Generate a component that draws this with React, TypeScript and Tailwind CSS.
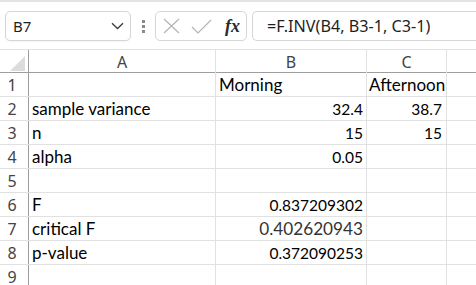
import React from "react"

const ui = { fontFamily: '"Noto Sans", "Open Sans", sans-serif' }
const cellFont = { fontFamily: 'Lato, "Liberation Sans", sans-serif' }

type Row = { n: number; a?: string; b?: string; c?: string; big?: boolean }

const rows: Row[] = [
  { n: 1, b: "Morning", c: "Afternoon" },
  { n: 2, a: "sample variance", b: "32.4", c: "38.7" },
  { n: 3, a: "n", b: "15", c: "15" },
  { n: 4, a: "alpha", b: "0.05" },
  { n: 5 },
  { n: 6, a: "F", b: "0.837209302" },
  { n: 7, a: "critical F", b: "0.402620943", big: true },
  { n: 8, a: "p-value", b: "0.372090253" },
  { n: 9 },
]

const isNum = (s?: string) => !!s && /^[0-9.]+$/.test(s)

// Lato runs wide on digits and narrow on letters next to Calibri, so size them apart
function cellSize(s?: string, big?: boolean) {
  if (big) return "text-[17.2px] text-[#333]"
  return isNum(s) ? "text-[15.5px]" : "text-[17px]"
}

function FormulaBar() {
  return (
    <div className="flex h-[49px] items-start border-t-2 border-[#e3e3e3] bg-white pt-[9px]" style={ui}>
      <div className="ml-[5px] flex h-[30px] w-[126px] items-center justify-between rounded-[5px] border border-[#d6d6d6] bg-white pl-[7px] pr-[6px] shadow-[0_1px_1px_rgba(0,0,0,0.04)]">
        <span className="text-[15px] text-[#1f1f1f]">B7</span>
        <svg width="13" height="8" viewBox="0 0 13 8" fill="none">
          <path d="M1 1.2 L6.5 6.5 L12 1.2" stroke="#3b3b3b" strokeWidth="1.3" />
        </svg>
      </div>
      <div className="ml-[11px] mt-[9px] flex flex-col gap-[2px]">
        <span className="h-[3px] w-[3px] bg-[#8a8a8a]" />
        <span className="h-[3px] w-[3px] bg-[#8a8a8a]" />
        <span className="h-[3px] w-[3px] bg-[#8a8a8a]" />
      </div>
      <div className="ml-[10px] flex h-[30px] w-[92px] items-center rounded-[5px] border border-[#d6d6d6] bg-white pl-[7px]">
        <svg width="17" height="16" viewBox="0 0 17 16" fill="none">
          <path d="M1 1 L16 15 M16 1 L1 15" stroke="#b4b4b4" strokeWidth="1.2" />
        </svg>
        <svg className="ml-[11px]" width="21" height="15" viewBox="0 0 21 15" fill="none">
          <path d="M1 8 L7 14 L20 1" stroke="#b4b4b4" strokeWidth="1.2" />
        </svg>
        <span
          className="ml-[13px] text-[18px] font-bold italic leading-none text-[#2a2a2a]"
          style={{ fontFamily: '"Liberation Serif", serif' }}
        >
          fx
        </span>
      </div>
      <div className="ml-[5px] flex h-[30px] flex-1 items-center rounded-l-[5px] border border-r-0 border-[#d6d6d6] bg-white pl-[14px]">
        <span className="text-[16.2px] text-[#1f1f1f]">=F.INV(B4, B3-1, C3-1)</span>
      </div>
    </div>
  )
}

export default function App() {
  const cols = "grid-cols-[29px_187px_151px_80px_1fr]"
  return (
    <div className="h-[285px] w-[476px] overflow-hidden bg-white">
      <FormulaBar />
      <div className={`grid h-[24px] ${cols} border-b border-t border-[#e3e3e3] border-b-[#9e9e9e] text-[16px] text-[#444]`} style={ui}>
        <div className="flex items-end justify-end border-r border-[#9e9e9e] pb-[3px] pr-[3px]">
          <svg width="15" height="15" viewBox="0 0 15 15">
            <path d="M15 0 L15 15 L0 15 Z" fill="#dcdcdc" />
          </svg>
        </div>
        <div className="flex items-center justify-center border-r border-[#e1e1e1]">A</div>
        <div className="flex items-center justify-center border-r border-[#e1e1e1]">B</div>
        <div className="flex items-center justify-center border-r border-[#e1e1e1]">C</div>
        <div />
      </div>
      {rows.map((r) => (
        <div key={r.n} className={`grid h-[24px] ${cols} border-b border-[#e1e1e1] leading-none text-black`} style={cellFont}>
          <div className="flex items-center justify-center border-r border-[#9e9e9e] pr-[4px] text-[16px] text-[#444]" style={ui}>
            {r.n}
          </div>
          <div className={`flex items-end overflow-visible whitespace-nowrap border-r border-[#e1e1e1] pb-[3px] pl-[3px] ${cellSize(r.a)}`}>{r.a}</div>
          <div
            className={`flex items-end whitespace-nowrap border-r border-[#e1e1e1] pb-[3px] pl-[3px] pr-[3px] ${isNum(r.b) ? "justify-end" : "justify-start"} ${cellSize(r.b, r.big)}`}
          >
            {r.b}
          </div>
          <div className={`flex items-end whitespace-nowrap border-r border-[#e1e1e1] pb-[3px] pl-[2px] pr-[4px] ${isNum(r.c) ? "justify-end" : "justify-start"} ${cellSize(r.c)}`}>
            {r.c}
          </div>
          <div />
        </div>
      ))}
    </div>
  )
}
